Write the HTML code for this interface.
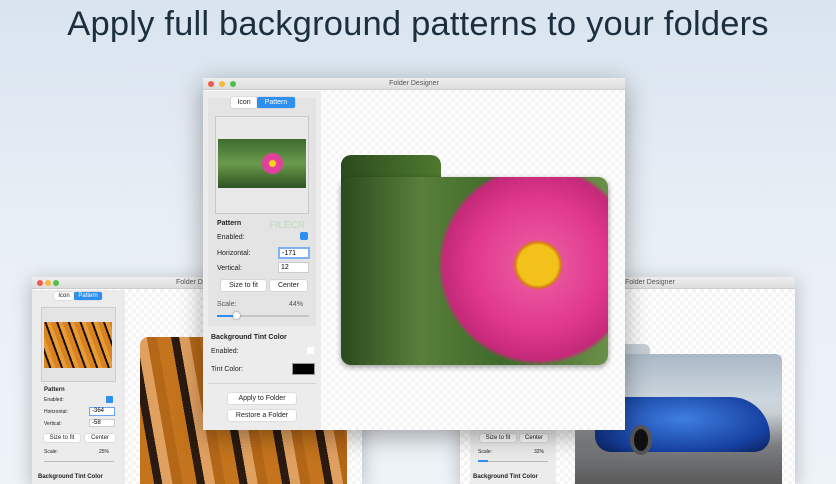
<!DOCTYPE html>
<html><head><style>
*{margin:0;padding:0;box-sizing:border-box}
html,body{width:836px;height:484px;overflow:hidden}
body{position:relative;font-family:"Liberation Sans",sans-serif;background:linear-gradient(#d9e4ef,#e9eff6 50%,#eef3f8)}
.t{position:absolute;top:5px;left:0;width:836px;text-align:center;font-size:34.5px;color:#1c2f3f;letter-spacing:0.2px}
.win{position:absolute;background:#fff;box-shadow:0 4px 18px rgba(0,0,0,.25);overflow:hidden}
.tb{position:absolute;left:0;right:0;top:0;height:12px;background:linear-gradient(#eee,#ddd);border-bottom:1px solid #ccc;font-size:7px;color:#555;text-align:center;line-height:12px}
.dot{position:absolute;top:3px;width:6px;height:6px;border-radius:50%}
.side{position:absolute;background:#ececec}
.s{position:absolute;font-size:7px;color:#222;white-space:nowrap}
.b{font-weight:bold}
.btn{position:absolute;background:#fff;border-radius:2px;box-shadow:0 0 1px rgba(0,0,0,.4);font-size:7px;text-align:center;color:#222}
.inp{position:absolute;background:#fff;border:1px solid #ccc;font-size:6px;padding-left:2px}
.grid{background-color:#fff;background-image:linear-gradient(45deg,#f5f5f5 25%,transparent 25%,transparent 75%,#f5f5f5 75%),linear-gradient(45deg,#f5f5f5 25%,transparent 25%,transparent 75%,#f5f5f5 75%);background-size:8px 8px;background-position:0 0,4px 4px}
</style></head><body>
<div class="t">Apply full background patterns to your folders</div>

<!-- left window -->
<div class="win grid" style="left:32px;top:277px;width:330px;height:207px">
 <div class="tb" style="text-align:left;padding-left:144px">Folder Des</div>
 <div class="dot" style="left:5px;background:#f05a4f"></div><div class="dot" style="left:13px;background:#f4b93a"></div><div class="dot" style="left:21px;background:#4ec146"></div>
 <div class="side" style="left:0;top:13px;width:93px;height:194px"></div>
 <div class="btn" style="left:22px;top:15px;width:20px;height:8px;font-size:6px;line-height:8px">Icon</div>
 <div class="btn" style="left:42px;top:15px;width:28px;height:8px;background:#2e8ff0;color:#fff;font-size:6px;line-height:8px">Pattern</div>
 <div style="position:absolute;left:9px;top:30px;width:75px;height:75px;border:1px solid #ccc;background:#e4e4e4"></div>
 <div style="position:absolute;left:12px;top:45px;width:68px;height:46px;background:repeating-linear-gradient(70deg,#d9821e 0 5px,#1a120a 5px 7px,#e79a38 7px 11px)"></div>
 <div class="s b" style="left:12px;top:110px;font-size:6px">Pattern</div>
 <div class="s" style="left:12px;top:120px;font-size:5px">Enabled:</div>
 <div style="position:absolute;left:74px;top:119px;width:7px;height:7px;background:#2e8ff0;border-radius:1px"></div>
 <div class="s" style="left:12px;top:132px;font-size:5px">Horizontal:</div>
 <div class="inp" style="left:57px;top:130px;width:26px;height:9px;border-color:#6aa6f0">-364</div>
 <div class="s" style="left:12px;top:144px;font-size:5px">Vertical:</div>
 <div class="inp" style="left:57px;top:142px;width:26px;height:8px">-58</div>
 <div class="btn" style="left:12px;top:157px;width:36px;height:8px;font-size:6px;line-height:8px">Size to fit</div>
 <div class="btn" style="left:53px;top:157px;width:30px;height:8px;font-size:6px;line-height:8px">Center</div>
 <div class="s" style="left:12px;top:172px;font-size:5px">Scale:</div><div class="s" style="left:67px;top:172px;font-size:5px">25%</div>
 <div style="position:absolute;left:12px;top:184px;width:70px;height:1px;background:#bbb"></div>
 <div class="s b" style="left:6px;top:197px;font-size:6px">Background Tint Color</div>
 <div style="position:absolute;left:108px;top:60px;width:207px;height:147px;border-radius:8px 8px 0 0;background:repeating-linear-gradient(80deg,#c4741c 0 14px,#2a1a10 14px 22px,#e0a060 22px 32px,#b56718 32px 42px)"></div>
</div>

<!-- right window -->
<div class="win grid" style="left:460px;top:277px;width:335px;height:207px">
 <div class="tb" style="text-align:left;padding-left:165px">Folder Designer</div>
 <div class="side" style="left:10px;top:13px;width:86px;height:194px"></div>
 <div class="btn" style="left:20px;top:157px;width:36px;height:8px;font-size:6px;line-height:8px">Size to fit</div>
 <div class="btn" style="left:60px;top:157px;width:28px;height:8px;font-size:6px;line-height:8px">Center</div>
 <div class="s" style="left:18px;top:172px;font-size:5px">Scale:</div><div class="s" style="left:74px;top:172px;font-size:5px">32%</div>
 <div style="position:absolute;left:18px;top:184px;width:70px;height:1px;background:#bbb"></div>
 <div style="position:absolute;left:18px;top:183px;width:10px;height:2px;background:#2e8ff0"></div>
 <div class="s b" style="left:13px;top:197px;font-size:6px">Background Tint Color</div>
 <div style="position:absolute;left:115px;top:67px;width:75px;height:20px;border-radius:6px 6px 0 0;background:#c5ced7"></div>
 <div style="position:absolute;left:115px;top:77px;width:207px;height:130px;border-radius:6px 6px 0 0;background:linear-gradient(#aab8c6,#cdd6de 35%,#c9d0d6 45%,#7c7e80 70%,#59595a)"></div>
 <div style="position:absolute;left:135px;top:120px;width:175px;height:55px;border-radius:40px 50px 20px 20px;background:radial-gradient(ellipse at 50% 40%,#3e7fe0,#1640a0 70%,#0a1e55)"></div>
 <div style="position:absolute;left:170px;top:148px;width:22px;height:30px;border-radius:50%;background:#111;border:4px solid #555"></div>
</div>

<!-- main window -->
<div class="win grid" style="left:203px;top:78px;width:422px;height:352px;box-shadow:0 6px 24px rgba(0,0,0,.35)">
 <div class="tb">Folder Designer</div>
 <div class="dot" style="left:5px;background:#f05a4f"></div><div class="dot" style="left:16px;background:#f4b93a"></div><div class="dot" style="left:27px;background:#4ec146"></div>
 <div class="side" style="left:0;top:13px;width:118px;height:339px"></div>
 <div class="side" style="left:5px;top:20px;width:108px;height:228px;background:#e4e4e4"></div>
 <div class="btn" style="left:28px;top:19px;width:26px;height:11px;line-height:11px">Icon</div>
 <div class="btn" style="left:54px;top:19px;width:38px;height:11px;line-height:11px;background:#2e8ff0;color:#fff">Pattern</div>
 <div style="position:absolute;left:12px;top:38px;width:94px;height:98px;border:1px solid #c8c8c8;background:#e9e9e9"></div>
 <div style="position:absolute;left:15px;top:61px;width:88px;height:49px;background:radial-gradient(circle at 62% 50%,#f7d21d 0 3px,#e2419b 4px 10px,transparent 11px),linear-gradient(#3e6b2e,#6a9a4c 50%,#2f5323)"></div>
 <div class="s b" style="left:14px;top:142px">Pattern</div>
 <div class="s" style="left:14px;top:156px">Enabled:</div>
 <div class="s b" style="left:66px;top:142px;font-size:10px;color:#c9dccb">FILECR</div>
 <div style="position:absolute;left:97px;top:154px;width:8px;height:8px;background:#2e8ff0;border-radius:2px"></div>
 <div class="s" style="left:14px;top:172px">Horizontal:</div>
 <div class="inp" style="left:75px;top:169px;width:32px;height:12px;border:2px solid #7eb2f2;font-size:7px;line-height:9px">-171</div>
 <div class="s" style="left:14px;top:187px">Vertical:</div>
 <div class="inp" style="left:75px;top:184px;width:31px;height:11px;font-size:7px;line-height:9px">12</div>
 <div class="btn" style="left:18px;top:202px;width:45px;height:11px;line-height:11px">Size to fit</div>
 <div class="btn" style="left:67px;top:202px;width:37px;height:11px;line-height:11px">Center</div>
 <div class="s" style="left:14px;top:223px;color:#555">Scale:</div><div class="s" style="left:86px;top:223px;color:#555">44%</div>
 <div style="position:absolute;left:14px;top:237px;width:92px;height:2px;background:#c5c5c5"></div>
 <div style="position:absolute;left:14px;top:237px;width:18px;height:2px;background:#2e8ff0"></div>
 <div style="position:absolute;left:30px;top:234px;width:7px;height:7px;border-radius:50%;background:#fff;box-shadow:0 0 2px rgba(0,0,0,.5)"></div>
 <div class="s b" style="left:8px;top:256px">Background Tint Color</div>
 <div class="s" style="left:8px;top:270px">Enabled:</div>
 <div style="position:absolute;left:104px;top:269px;width:7px;height:7px;background:#fff;border-radius:1px"></div>
 <div class="s" style="left:8px;top:288px">Tint Color:</div>
 <div style="position:absolute;left:89px;top:285px;width:23px;height:12px;background:#000;border:1px solid #999"></div>
 <div style="position:absolute;left:5px;top:305px;width:108px;height:1px;background:#d5d5d5"></div>
 <div class="btn" style="left:25px;top:315px;width:68px;height:11px;line-height:11px">Apply to Folder</div>
 <div class="btn" style="left:25px;top:332px;width:68px;height:11px;line-height:11px">Restore a Folder</div>
 <!-- folder -->
 <div style="position:absolute;left:138px;top:77px;width:100px;height:40px;border-radius:10px 10px 0 0;background:linear-gradient(90deg,#2c4a1e,#4e7a2e)"></div>
 <div style="position:absolute;left:138px;top:99px;width:267px;height:188px;border-radius:10px;overflow:hidden;box-shadow:0 2px 6px rgba(0,0,0,.4);background:linear-gradient(90deg,#2c4a1e,#587f3a 30%,#3f6a2a 60%,#6a8f48)">
  <div style="position:absolute;left:97px;top:-15px;width:170px;height:203px;overflow:hidden">
   <div style="position:absolute;left:0;top:0;width:200px;height:206px;border-radius:50%;background:radial-gradient(circle at 50% 50%,#f2c21a 0 20px,#d67a1a 23px,#e8529c 25px,#e1388e 65px,#c42978 95px,transparent 100px)"></div>
  </div>
 </div>
</div>
</body></html>
